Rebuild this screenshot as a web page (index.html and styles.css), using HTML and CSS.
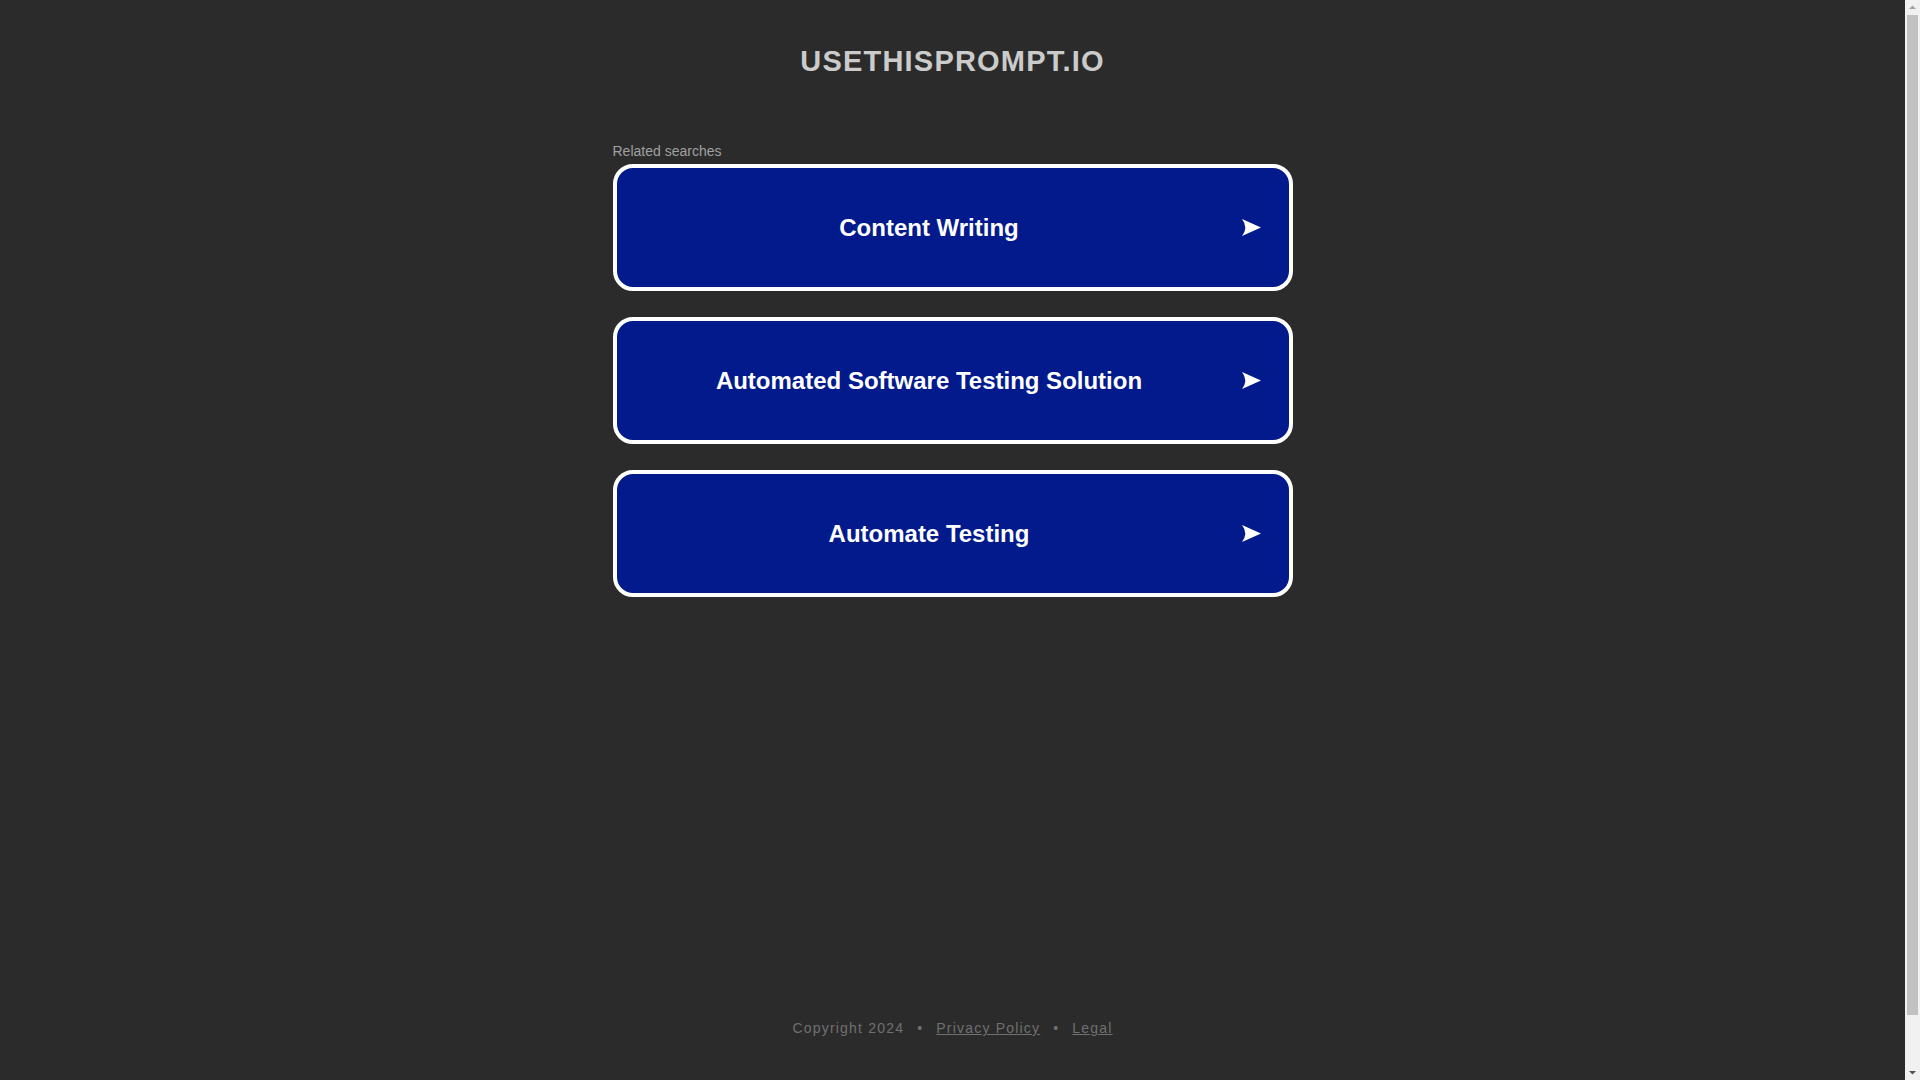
FILE: index.html
```html
<!DOCTYPE html>
<html lang="en">
<head>
<meta charset="utf-8">
<title>usethisprompt.io</title>
<link rel="stylesheet" href="styles.css">
</head>
<body>
<div class="page">
  <header class="header">
    <h1 class="domain">USETHISPROMPT.IO</h1>
  </header>
  <main class="main">
    <div class="related">
      <p class="related-title">Related searches</p>
      <div class="list">
        <a class="card" href="#">
          <span class="label">Content Writing</span>
          <svg class="arrow" width="19" height="17" viewBox="0 0 19 17"><path d="M0 0 L19 8.5 L0 17 Q6.5 8.5 0 0 Z" fill="#fff"/></svg>
        </a>
        <a class="card" href="#">
          <span class="label">Automated Software Testing Solution</span>
          <svg class="arrow" width="19" height="17" viewBox="0 0 19 17"><path d="M0 0 L19 8.5 L0 17 Q6.5 8.5 0 0 Z" fill="#fff"/></svg>
        </a>
        <a class="card" href="#">
          <span class="label">Automate Testing</span>
          <svg class="arrow" width="19" height="17" viewBox="0 0 19 17"><path d="M0 0 L19 8.5 L0 17 Q6.5 8.5 0 0 Z" fill="#fff"/></svg>
        </a>
      </div>
    </div>
  </main>
  <footer class="footer">
    <span>Copyright 2024</span>
    <span class="sep">•</span>
    <a href="#" class="flink">Privacy Policy</a>
    <span class="sep">•</span>
    <a href="#" class="flink">Legal</a>
  </footer>
</div>
<div class="scrollbar" aria-hidden="true">
  <svg class="sb-btn" width="15" height="15" viewBox="0 0 15 15"><path d="M4 9 L7.5 5.5 L11 9 Z" fill="#a3a3a3"/></svg>
  <div class="sb-track"><div class="sb-thumb"></div></div>
  <svg class="sb-btn" width="15" height="15" viewBox="0 0 15 15"><path d="M4 6 L7.5 9.5 L11 6 Z" fill="#505050"/></svg>
</div>
</body>
</html>
```

FILE: styles.css
```css
html, body {
  margin: 0;
  padding: 0;
}
body {
  background: #2b2b2b;
  font-family: Arial, "Liberation Sans", sans-serif;
  padding-right: 15px;
}
.page {
  display: flex;
  flex-direction: column;
  align-items: center;
}
.header {
  padding-top: 45px;
}
.domain {
  margin: 0;
  font-size: 29px;
  line-height: 33px;
  font-weight: bold;
  letter-spacing: 1.2px;
  color: #cbcbcb;
  text-align: center;
}
.main {
  margin-top: 65px;
}
.related {
  width: 680px;
}
.related-title {
  margin: 0 0 5px 0;
  font-size: 14px;
  line-height: 16px;
  color: #a0a0a0;
}
.list {
  display: flex;
  flex-direction: column;
  gap: 26px;
}
.card {
  box-sizing: border-box;
  height: 127px;
  display: flex;
  align-items: center;
  background: #021a8c;
  border: 4px solid #fff;
  border-radius: 20px;
  text-decoration: none;
  color: #fff;
}
.label {
  flex: 1;
  text-align: center;
  font-size: 24px;
  font-weight: bold;
  line-height: 28px;
}
.arrow {
  flex: none;
  margin-right: 28px;
}
.footer {
  margin-top: 423px;
  padding-bottom: 98px;
  display: flex;
  gap: 13px;
  font-size: 14px;
  line-height: 16px;
  letter-spacing: 1.2px;
  color: #707070;
}
.flink {
  color: #707070;
  text-decoration: underline;
}
.scrollbar {
  position: fixed;
  top: 0;
  right: 0;
  width: 15px;
  height: 100vh;
  background: #f1f1f1;
  display: flex;
  flex-direction: column;
}
.sb-btn {
  flex: none;
  display: block;
}
.sb-track {
  flex: 1;
  padding: 0 2px 50px 2px;
  display: flex;
}
.sb-thumb {
  flex: 1;
  background: #c1c1c1;
}
```
